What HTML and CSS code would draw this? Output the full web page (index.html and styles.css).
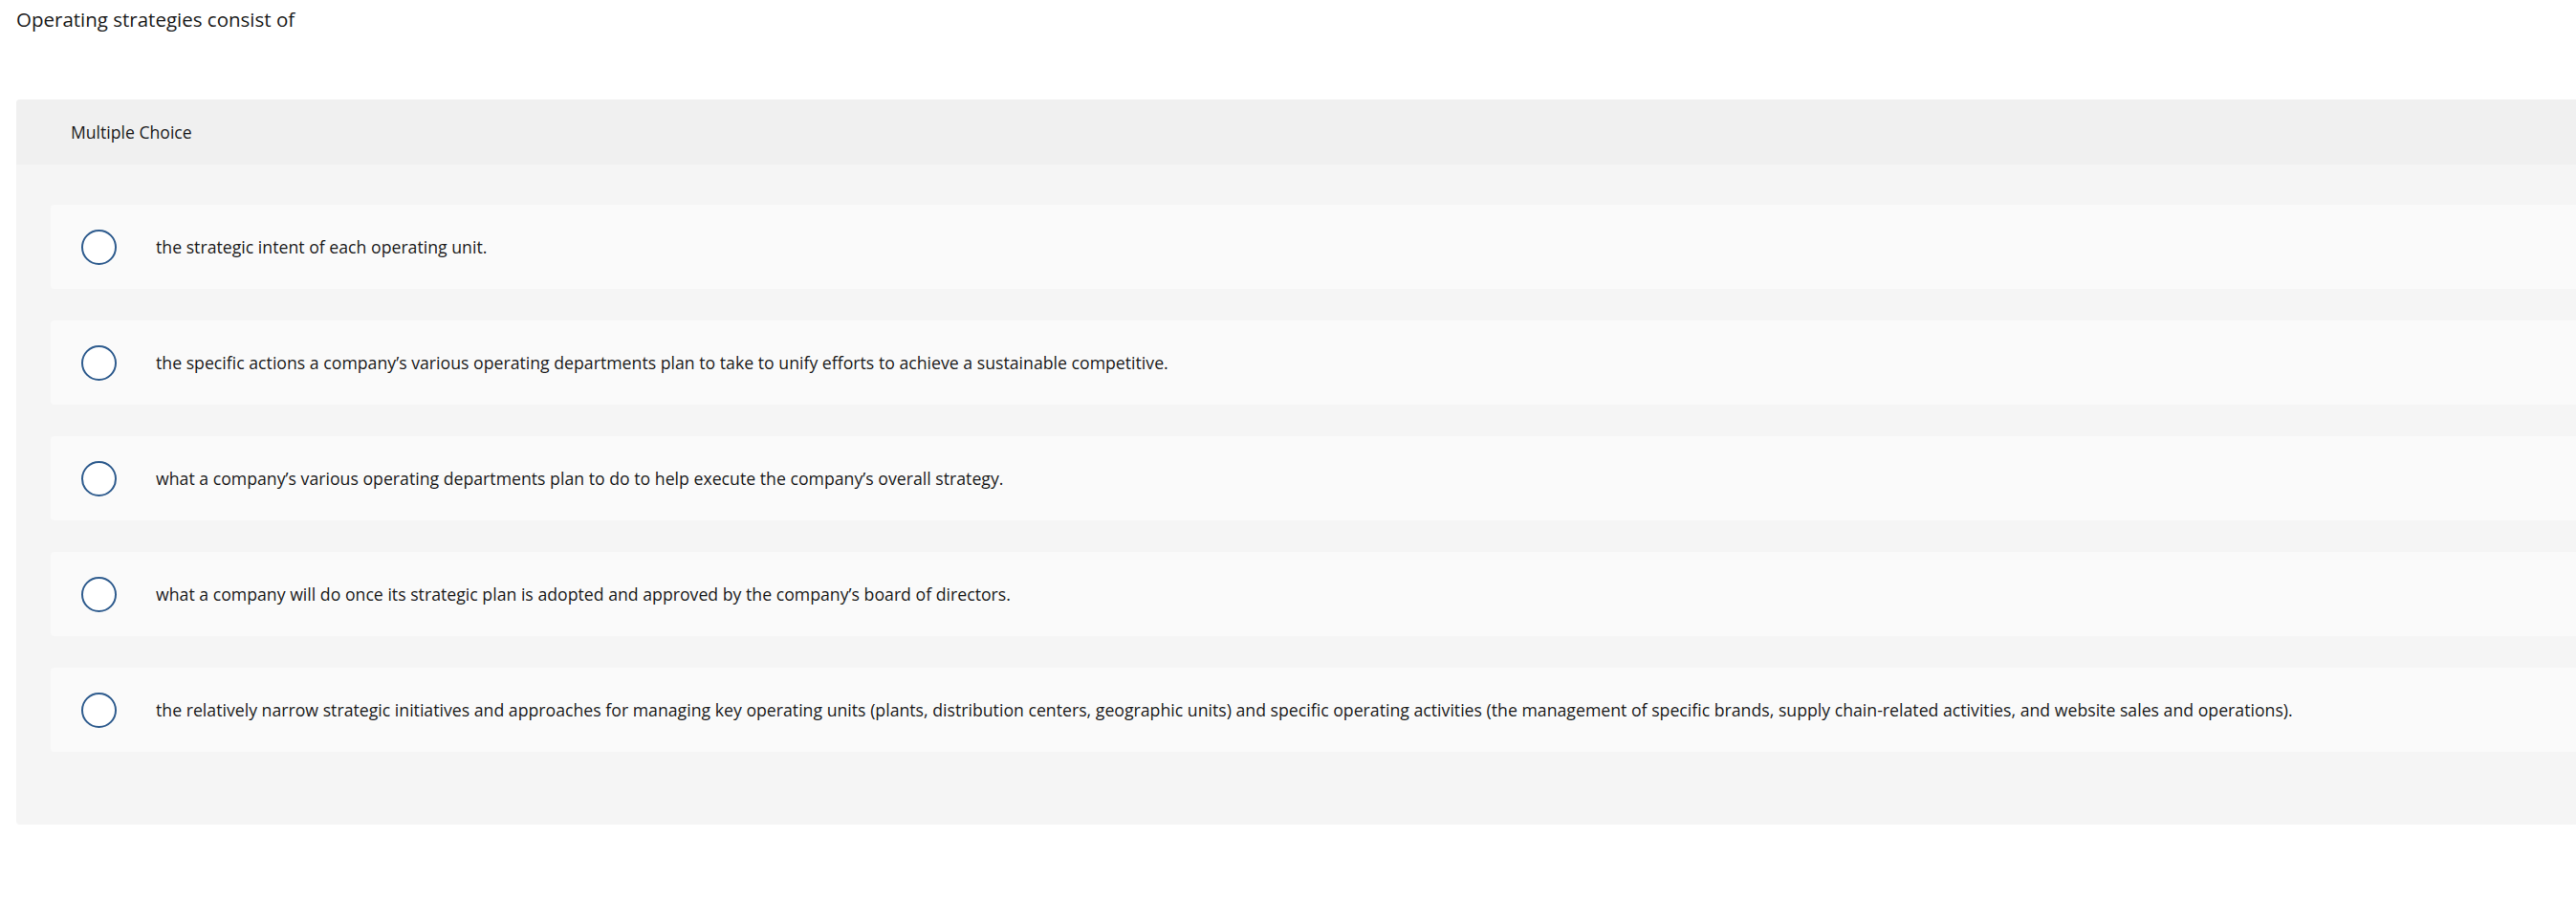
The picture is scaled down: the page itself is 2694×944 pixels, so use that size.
FILE: index.html
```html
<!DOCTYPE html>
<html lang="en">
<head>
<meta charset="utf-8">
<title>Operating strategies</title>
<link rel="stylesheet" href="styles.css">
</head>
<body>
<div class="page">
  <p class="question">Operating strategies consist of</p>
  <section class="panel">
    <header class="panel-head">Multiple Choice</header>
    <div class="options">
      <label class="option"><span class="radio"></span><span class="opt-text">the strategic intent of each operating unit.</span></label>
      <label class="option"><span class="radio"></span><span class="opt-text">the specific actions a company’s various operating departments plan to take to unify efforts to achieve a sustainable competitive.</span></label>
      <label class="option"><span class="radio"></span><span class="opt-text">what a company’s various operating departments plan to do to help execute the company’s overall strategy.</span></label>
      <label class="option"><span class="radio"></span><span class="opt-text">what a company will do once its strategic plan is adopted and approved by the company’s board of directors.</span></label>
      <label class="option"><span class="radio"></span><span class="opt-text">the relatively narrow strategic initiatives and approaches for managing key operating units (plants, distribution centers, geographic units) and specific operating activities (the management of specific brands, supply chain-related activities, and website sales and operations).</span></label>
    </div>
  </section>
</div>
</body>
</html>
```
FILE: styles.css
```css
html, body {
  margin: 0;
  padding: 0;
  background: #ffffff;
}
body {
  font-family: "Open Sans", Lato, "Liberation Sans", sans-serif;
  color: #1a1a1a;
}
.page {
  padding-left: 17px;
}
.question {
  margin: 0;
  height: 104px;
  padding-top: 8px;
  box-sizing: border-box;
  font-size: 20.5px;
  line-height: 24px;
}
.panel {
  background: #f5f5f5;
  border-radius: 4px 0 0 4px;
  padding-bottom: 76px;
}
.panel-head {
  height: 68px;
  background: #f0f0f0;
  border-radius: 4px 0 0 0;
  display: flex;
  align-items: center;
  padding-left: 57px;
  font-size: 17.6px;
}
.options {
  display: flex;
  flex-direction: column;
  gap: 33px;
  padding: 42px 0 0 36px;
}
.option {
  height: 88px;
  background: #fafafa;
  border-radius: 4px 0 0 4px;
  display: flex;
  align-items: center;
  padding-left: 32px;
}
.radio {
  flex: none;
  width: 37px;
  height: 37px;
  box-sizing: border-box;
  border: 2px solid #2f5c8e;
  border-radius: 50%;
  background: #ffffff;
  margin-right: 41px;
}
.opt-text {
  font-size: 17.7px;
  line-height: 22px;
  white-space: nowrap;
}
```
